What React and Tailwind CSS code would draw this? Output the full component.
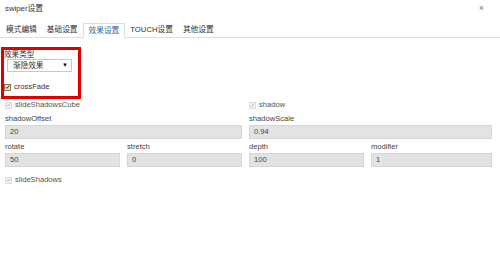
import React from "react";

const tabs = ["模式编辑", "基础设置", "效果设置", "TOUCH设置", "其他设置"];

function Check({ active }) {
  return (
    <span
      className={`inline-flex items-center justify-center w-[7px] h-[7px] border ${
        active ? "border-[#8a7a55] bg-[#eadfc4]" : "border-[#dcdcdc] bg-[#f4f4f4]"
      }`}
    >
      <svg viewBox="0 0 8 8" className="w-[6px] h-[6px]">
        <path
          d="M1 4.2 L3 6.2 L7 1.5"
          fill="none"
          stroke={active ? "#222" : "#b5b5b5"}
          strokeWidth="1.4"
        />
      </svg>
    </span>
  );
}

function CheckRow({ label, active }) {
  return (
    <div className="flex items-center h-[10px] gap-[3px]">
      <Check active={active} />
      <span className={active ? "text-[#333]" : "text-[#555]"}>{label}</span>
    </div>
  );
}

function Field({ label, value, span }) {
  return (
    <div className={span ? "col-span-2" : ""}>
      <div className="h-[9px] leading-[9px] text-[#444]">{label}</div>
      <div className="mt-[2px] h-[14px] bg-[#e3e3e3] border border-[#d6d6d6] flex items-center pl-[4px] text-[#444]">
        {value}
      </div>
    </div>
  );
}

export default function App() {
  return (
    <div className="relative w-[500px] h-[265px] bg-white overflow-hidden font-['Liberation_Sans','Noto_Sans_CJK_SC',sans-serif] text-[7.6px] text-[#333]">
      <div className="flex items-center justify-between h-[17px] pl-[5px] pr-[16px] text-[7.8px]">
        <span>swiper设置</span>
        <span className="text-[#777] text-[9px]">×</span>
      </div>

      <div className="mt-[6px] flex border-b border-[#dddddd] h-[15px] pl-[1px] text-[7.7px]">
        {tabs.map((t) => (
          <div
            key={t}
            className={`px-[5px] flex items-center ${
              t === "效果设置"
                ? "border border-[#dddddd] border-b-white -mb-px bg-white text-[#3b6a93]"
                : "text-[#333]"
            }`}
          >
            {t}
          </div>
        ))}
      </div>

      <div className="pl-[4px] pr-[8px]">
        <div className="mt-[12px] h-[9px] leading-[9px]">效果类型</div>
        <div className="ml-[3px] w-[65px] h-[13px] bg-white border border-[#c8c8c8] flex items-center justify-between pl-[5px] pr-[3px]">
          <span>渐隐效果</span>
          <span className="text-[6px] text-[#111]">▼</span>
        </div>
        <div className="mt-[10px]">
          <CheckRow label="crossFade" active />
        </div>

        <div className="mt-[8px] grid grid-cols-[115px_115px_115px_121px] gap-x-[7px] pl-[1px]">
          <div className="col-span-2">
            <CheckRow label="slideShadowsCube" />
          </div>
          <div className="col-span-2">
            <CheckRow label="shadow" />
          </div>
        </div>

        <div className="mt-[4px] grid grid-cols-[115px_115px_115px_121px] gap-x-[7px] gap-y-[3px] pl-[1px]">
          <Field label="shadowOffset" value="20" span />
          <Field label="shadowScale" value="0.94" span />
          <Field label="rotate" value="50" />
          <Field label="stretch" value="0" />
          <Field label="depth" value="100" />
          <Field label="modifier" value="1" />
        </div>

        <div className="mt-[8px] pl-[1px]">
          <CheckRow label="slideShadows" />
        </div>
      </div>

      <div className="absolute left-[1px] top-[47px] w-[80px] h-[52px] border-[3px] border-[#e00000]" />
    </div>
  );
}
